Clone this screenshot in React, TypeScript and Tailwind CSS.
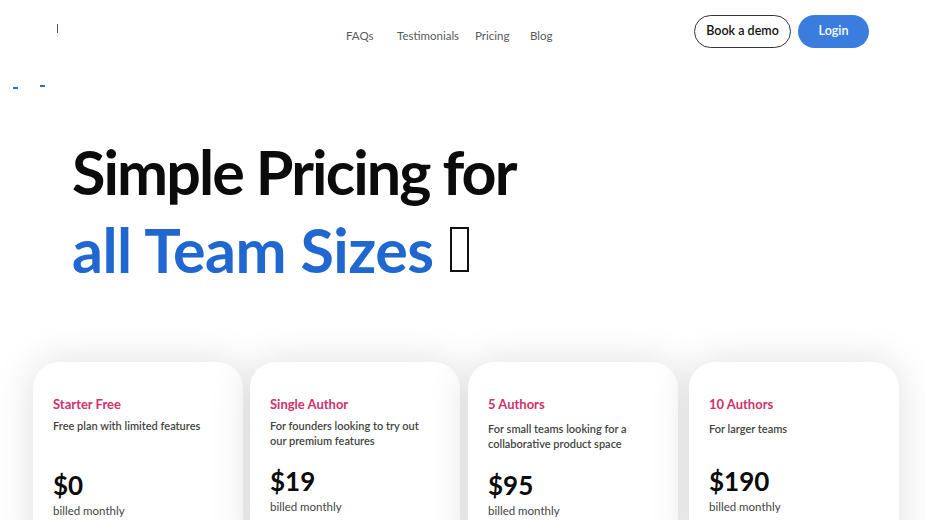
import { ReactNode } from "react";

const plans = [
  { name: "Starter Free", desc: ["Free plan with limited features"], price: "$0", descTop: "mt-[3px]", priceTop: "mt-[37px]" },
  { name: "Single Author", desc: ["For founders looking to try out", "our premium features"], price: "$19", descTop: "mt-[3px]", priceTop: "mt-[18px]" },
  { name: "5 Authors", desc: ["For small teams looking for a", "collaborative product space"], price: "$95", descTop: "mt-[6px]", priceTop: "mt-[19px]" },
  { name: "10 Authors", desc: ["For larger teams"], price: "$190", descTop: "mt-[6px]", priceTop: "mt-[30px]" },
];

function NavLink({ children, w }: { children: ReactNode; w: string }) {
  return <span className={`${w} text-[11.5px] text-[#5a5a5a] cursor-pointer`}>{children}</span>;
}

export default function App() {
  return (
    <div className="w-[925px] h-[520px] overflow-hidden bg-white font-['Lato',sans-serif] text-[#111]">
      <header className="flex items-start h-[63px] pl-[57px] pr-[56px]">
        <div className="w-[289px] pt-[24px]">
          <div className="w-px h-[9px] bg-[#555]" />
        </div>
        <nav className="flex pt-[27px]">
          <NavLink w="w-[51px]">FAQs</NavLink>
          <NavLink w="w-[78px]">Testimonials</NavLink>
          <NavLink w="w-[55px]">Pricing</NavLink>
          <NavLink w="w-auto">Blog</NavLink>
        </nav>
        <div className="ml-auto flex gap-[7px] pt-[15px]">
          <button className="h-[33px] w-[97px] rounded-full border border-[#333] text-[12.5px] font-semibold text-[#111]">
            Book a demo
          </button>
          <button className="h-[33px] w-[71px] rounded-full bg-[#3a7ddf] text-[12.5px] font-semibold text-white">
            Login
          </button>
        </div>
      </header>

      <div className="flex gap-[22px] pl-[13px] h-[2px] mt-[24px]">
        <div className="w-[5px] h-[2px] bg-[#2a6fd6]" />
        <div className="w-[5px] h-[2px] bg-[#2a6fd6] -mt-[2px]" />
      </div>

      <section className="pl-[72px] mt-[44px]">
        <h1 className="text-[61px] leading-[78px] font-bold text-[#0b0b0b]">
          <span className="tracking-[-1.9px]">Simple Pricing for</span>
          <br />
          <span className="text-[#2067cf] tracking-[-0.5px]">all Team Sizes </span>
          <span className="inline-block align-[1px] w-[19px] h-[45px] border-2 border-[#111] ml-[2px]" />
        </h1>
      </section>

      <section className="flex gap-[7px] pl-[33px] mt-[73px]">
        {plans.map((p, i) => (
          <div
            key={p.name}
            className={`w-[210px] h-[200px] rounded-[26px] bg-white shadow-[0_0_40px_rgba(0,0,0,0.13)] pt-[33px] pl-[20px] ${i === 2 ? "ml-[1px]" : ""} ${i === 3 ? "ml-[4px]" : ""}`}
          >
            <div className="text-[13px] font-bold text-[#d0306d]">{p.name}</div>
            <div className={`${p.descTop} text-[11px] leading-[15px] font-semibold text-[#444]`}>
              {p.desc.map((d) => (
                <div key={d}>{d}</div>
              ))}
            </div>
            <div className={`${p.priceTop} text-[26px] leading-[30px] font-bold text-[#0b0b0b]`}>{p.price}</div>
            <div className="mt-[2px] text-[11.5px] text-[#444]">billed monthly</div>
          </div>
        ))}
      </section>
    </div>
  );
}
